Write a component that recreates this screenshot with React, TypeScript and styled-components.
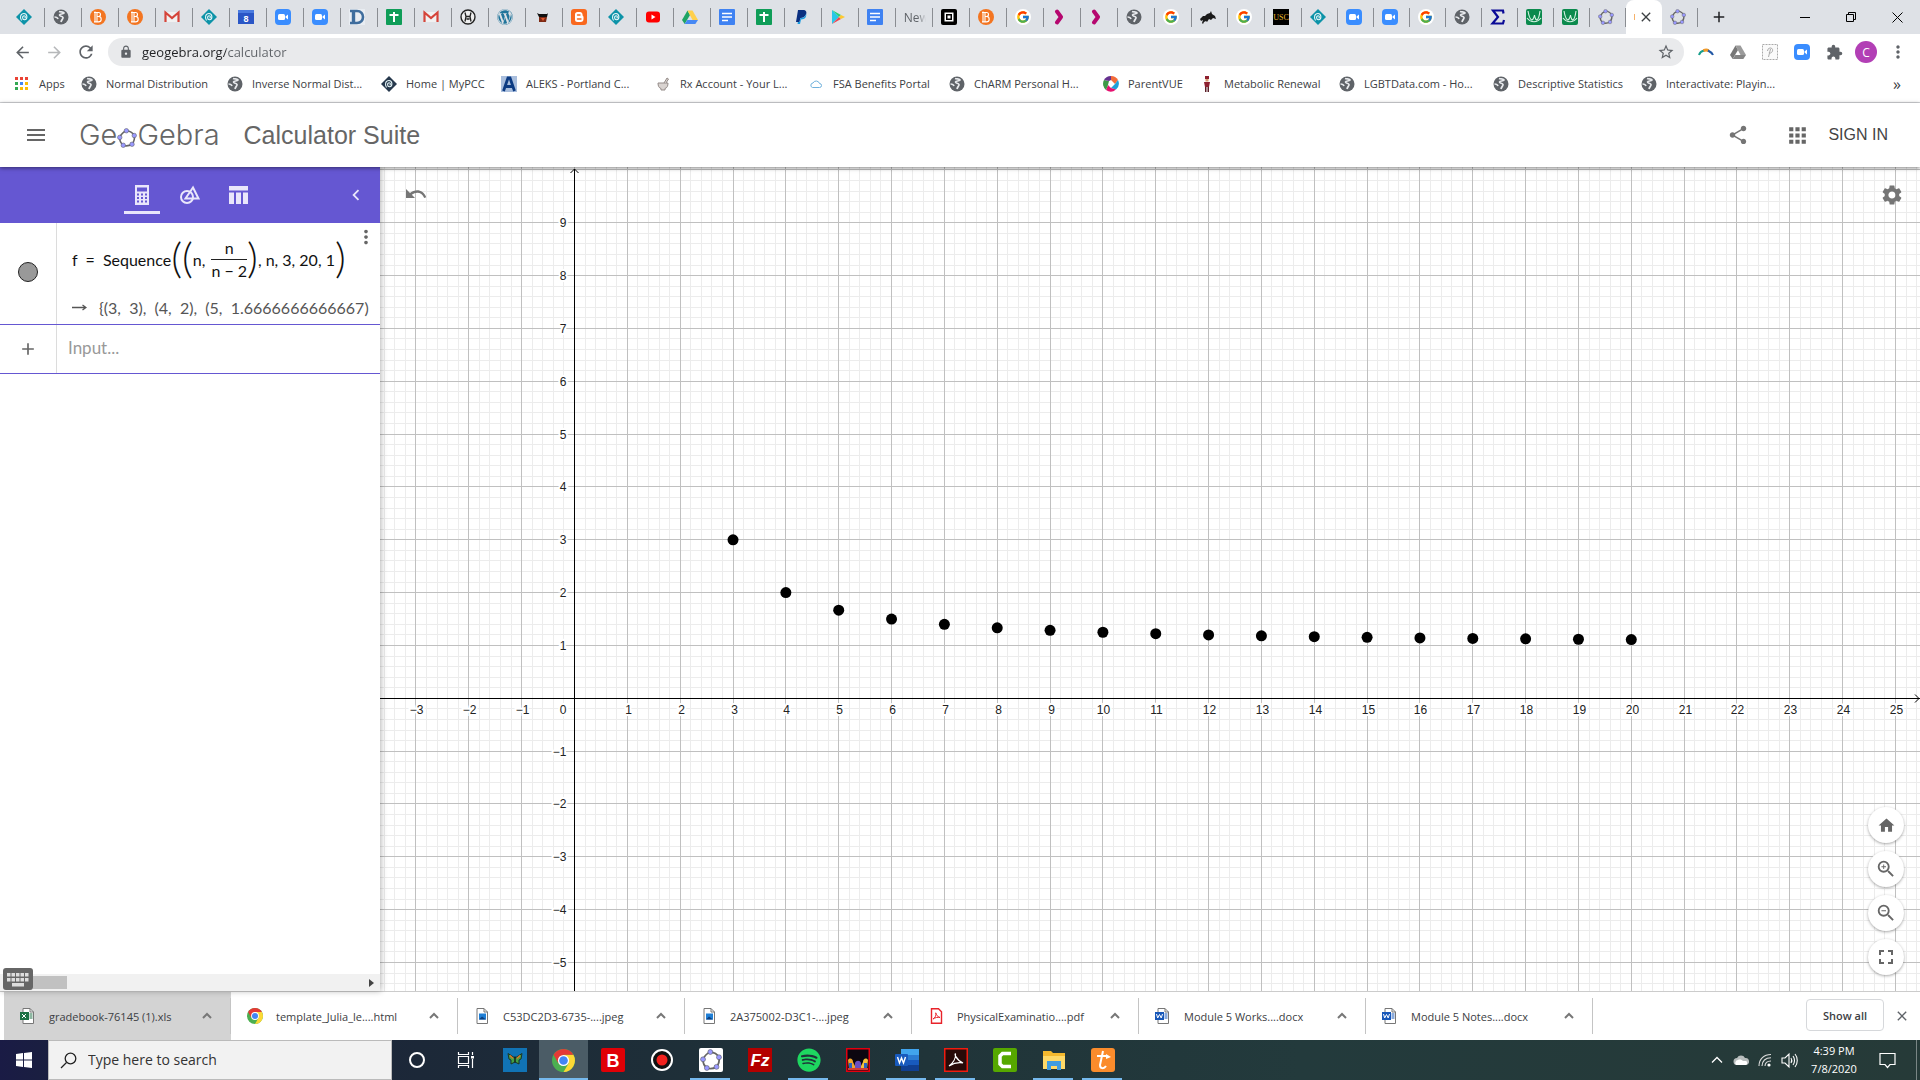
import React from "react";
import styled, { createGlobalStyle } from "styled-components";
import {
  MdAdd, MdApps, MdArrowBack, MdArrowForward, MdChevronLeft, MdClose, MdExtension, MdFullscreen, MdHome,
  MdLock, MdMenu, MdMoreVert, MdRefresh, MdSettings, MdShare, MdStarBorder, MdZoomIn, MdZoomOut,
} from "react-icons/md";
import { FaSpotify, FaWordpress } from "react-icons/fa";
import { FcGoogle } from "react-icons/fc";

const uiFont = '"Open Sans", "Noto Sans", sans-serif';
const mathFont = 'Lato, "Liberation Sans", sans-serif';
const arial = '"Liberation Sans", Arial, sans-serif';
const purple = "#6557d2";

const GlobalStyle = createGlobalStyle`
  *, *::before, *::after { box-sizing: border-box; }
  body { margin: 0; background: #fff; font-family: ${uiFont}; font-size: 12px; color: #3c4043; }
  button, input { font: inherit; color: inherit; border: 0; padding: 0; margin: 0; background: none; outline: none; }
  a { color: inherit; text-decoration: none; }
  svg { display: block; flex: none; }
`;

/* ---------- icons ---------- */

type IconProps = { size?: number };
type SvgProps = IconProps & { children: React.ReactNode; box?: number };

const Svg = ({ size = 16, box = 16, children }: SvgProps) => (
  <svg width={size} height={size} viewBox={`0 0 ${box} ${box}`} aria-hidden="true">{children}</svg>
);

const Diamond = ({ color = "#0d93a8" }: { color?: string }) => (
  <Svg>
    <path d="M8 0l8 8-8 8-8-8z" fill={color} />
    <path d="M5.500 11.500c-2-3-1-7 2.500-7s4 6 .5 6.300c-2.500 0-2.500-4-.3-4 1.500 0 1.500 2 .3 2.200" fill="none" stroke="#e6f6f8" strokeWidth="1.100" />
  </Svg>
);
const Globe = () => (
  <Svg>
    <circle cx="8" cy="8" r="7.500" fill="#5f6368" />
    <path d="M6 2.500c2 .8 4-.5 5 1.500-1 1.500-4 .5-4.500 2-.3 1.500 3 1 3.500 2.500.3 1.500-1.500 2-2 4.500M1.500 8c1.500 0 3 .5 3.500 2" fill="none" stroke="#e8eaed" strokeWidth="1.700" />
  </Svg>
);
const BankB = () => (
  <Svg>
    <circle cx="8" cy="8" r="8" fill="#f37521" />
    <path d="M5 2.500v11M4 3.500h4.500a2 2 0 010 4H6.500M8.500 7.500a2.700 2.700 0 010 5.400H4M7 4v8.500" fill="none" stroke="#fff" strokeWidth="1.100" />
  </Svg>
);
const Gmail = () => (
  <Svg>
    <path d="M1 3h14v10H1z" fill="#f1f1f1" />
    <path d="M1.500 13V3.500L8 9l6.500-5.500V13" fill="none" stroke="#d5443a" strokeWidth="2.200" />
  </Svg>
);
const Calendar = () => (
  <Svg>
    <path d="M0 1h16v14H0z" fill="#2a56c6" />
    <path d="M0 1h16v3H0z" fill="#4a7be0" />
    <text x="8" y="13" textAnchor="middle" fontSize="9" fontWeight="700" fontFamily={arial} fill="#fff">8</text>
  </Svg>
);
const Zoom = () => (
  <Svg>
    <rect width="16" height="16" rx="4" fill="#3a8dff" />
    <rect x="3" y="5" width="7" height="6" rx="1.500" fill="#fff" />
    <path d="M10.500 7.500L13 5.500v5l-2.500-2z" fill="#fff" />
  </Svg>
);
const LetterD = () => (
  <Svg>
    <path d="M0 0h16v16H0z" fill="#e9edf2" />
    <path d="M1 2h7c8 0 8 12 0 12H1" fill="none" stroke="#3f6d9d" strokeWidth="2.600" />
    <path d="M4.500 2v12" stroke="#3f6d9d" strokeWidth="3.400" />
  </Svg>
);
const Sheets = () => (
  <Svg>
    <rect width="16" height="16" rx="1" fill="#0f9d58" />
    <path d="M8 3v10M3.500 6h9" stroke="#fff" strokeWidth="2" />
  </Svg>
);
const Docs = () => (
  <Svg>
    <rect width="16" height="16" rx="1" fill="#3f82f2" />
    <path d="M3 4.500h10M3 8h10M3 11.500h6" stroke="#fff" strokeWidth="1.600" />
  </Svg>
);
const RoundH = () => (
  <Svg>
    <circle cx="8" cy="8" r="7" fill="#eee" stroke="#222" strokeWidth="1.400" />
    <path d="M5 3.500l1 4-1 5M11 3.500l-1 4 1 5M6 7.500h4M6.500 10h3" fill="none" stroke="#222" strokeWidth="1.300" />
  </Svg>
);
const Pot = () => (
  <Svg>
    <path d="M3 4l2 1h8l1-1-1 4H5z" fill="#111" />
    <path d="M5 8h8l-1 5H5z" fill="#7d2a14" /><path d="M7 9l2 3 2-3z" fill="#e2562c" />
  </Svg>
);
const Blogger = () => (
  <Svg>
    <rect width="16" height="16" rx="3" fill="#f9681e" />
    <path d="M4 5.500A2.500 2.500 0 016.500 3H9a2.500 2.500 0 012.500 3c0 1 1 1 1 2v2a3 3 0 01-3 3h-3A2.500 2.500 0 014 10.500z" fill="#fff" />
    <path d="M6.500 6H9M6.500 10h3.500" stroke="#f9681e" strokeWidth="1.400" strokeLinecap="round" />
  </Svg>
);
const YouTube = () => (
  <Svg><rect x="1" y="2.500" width="14" height="11" rx="3" fill="#f00" /><path d="M6.500 5.500l4 2.500-4 2.500z" fill="#fff" /></Svg>
);
const Drive = ({ gray = false }: { gray?: boolean }) => (
  <Svg>
    <path d="M5.500 1.500L0 11l2.700 4L8 6z" fill={gray ? "#777" : "#1fa463"} />
    <path d="M5.500 1.500h5L16 11h-5.500z" fill={gray ? "#9b9b9b" : "#ffd04b"} />
    <path d="M5.300 11H16l-2.700 4H2.700z" fill={gray ? "#858585" : "#4688f4"} />
  </Svg>
);
const PayPal = () => (
  <Svg>
    <path d="M5 1h5c3 0 4 2 3 4.500S9.500 9 7.500 9L6.500 13H3z" fill="#0a2f80" />
    <path d="M13 4.500c1 3-1 6-5 6L7 15H4.500l.4-2h1.600L7.500 9c3 0 5-1 5.500-4.500z" fill="#1a9be0" />
  </Svg>
);
const Play = () => (
  <Svg>
    <path d="M2 1v14l7-7z" fill="#29c7e8" /><path d="M2 1l9 5-2 2z" fill="#27d07c" />
    <path d="M2 15l9-5-2-2z" fill="#ef4550" /><path d="M11 6l4 2-4 2-2-2z" fill="#fdc92f" />
  </Svg>
);
const Square = () => (
  <Svg><rect width="16" height="16" rx="2" fill="#000" /><rect x="3.500" y="3.500" width="9" height="9" fill="#fff" /><rect x="5" y="5" width="6" height="6" fill="#000" /><rect x="6.500" y="6.500" width="3" height="3" fill="#fff" /></Svg>
);
const Google = () => (
  <Svg><circle cx="8" cy="8" r="8" fill="#fff" /><svg x="1" y="1" width="14" height="14"><FcGoogle size={14} /></svg></Svg>
);
const Magenta = () => <Svg><path d="M5 2.500l4 5.500-4 5.500" fill="none" stroke="#b5076f" strokeWidth="4" strokeLinejoin="round" strokeLinecap="round" /></Svg>;
const Bison = () => (
  <Svg><path d="M0 10l3-3 2 0 2-2 3-1 1-2 1 3 3 2 1 3-3-1-2 2-2-1-2 3-1-1-2 1-1 2-1-1 1-3-2 1z" fill="#1a1a1a" /></Svg>
);
const Usc = () => (
  <Svg><path d="M0 0h16v16H0z" fill="#000" /><text x="8" y="11" textAnchor="middle" fontSize="8" fontFamily='"Liberation Serif", serif' fill="#e8b92e">USC</text></Svg>
);
const Sigma = () => <Svg><path d="M13.500 4.500L13 1.500H3L8 8l-5.500 6.500h10.500l1-3.500" fill="none" stroke="#0a0a96" strokeWidth="2.200" /></Svg>;
const Desmos = () => (
  <Svg>
    <rect width="16" height="16" rx="2" fill="#0b8a4d" />
    <path d="M2 2c2 11 5 11 6.500 4 1 7 4 7 5.500-4M1 9c4 5 10 5 14 0" fill="none" stroke="#d8f3e5" strokeWidth="1.100" />
  </Svg>
);

const pentagon = [[7.5, 2.2], [13.8, 6], [12, 13], [5, 13.8], [2.2, 7.5]];
const GeoPentagon = ({ size = 16 }: IconProps) => (
  <Svg size={size}>
    <path d="M7.500 2.200Q11.800 2.400 13.800 6 14.500 10 12 13 8.500 15 5 13.800 2 11.500 2.200 7.500 4 3.500 7.500 2.200z" fill="none" stroke="#666" strokeWidth="1.300" />
    {pentagon.map(([x, y]) => <circle key={x} cx={x} cy={y} r="1.800" fill="#9999ff" stroke="#555" strokeWidth=".4" />)}
  </Svg>
);
const AppsDots = () => (
  <Svg>
    {["#ea4335", "#ea4335", "#ea4335", "#34a853", "#4285f4", "#fbbc05", "#34a853", "#fbbc05", "#fbbc05"].map((c, i) => (
      <rect key={i} x={1 + (i % 3) * 5} y={1 + Math.floor(i / 3) * 5} width="3" height="3" fill={c} />
    ))}
  </Svg>
);
const Aleks = () => (
  <Svg><path d="M0 0h16v16H0z" fill="#a9bedd" /><path d="M2.500 15L7 2h2l4.500 13M5 10.500h6" fill="none" stroke="#0b3a82" strokeWidth="2.800" /></Svg>
);
const Mortar = () => (
  <Svg><path d="M3 7h10c0 3-1 5-3 5.500V14H6v-1.500C4 12 3 10 3 7z" fill="#d9d3d0" stroke="#948b88" /><path d="M9 7l3-5 1.500 1L11 7" fill="#d9d3d0" stroke="#948b88" /></Svg>
);
const CloudLine = () => <Svg><path d="M4.500 11.500h7a2 2 0 000-4 3.500 3.500 0 00-6.500-.5A2.300 2.300 0 004.500 11.500z" fill="none" stroke="#6fb1dc" /></Svg>;
const ParentVue = () => (
  <Svg>
    <path d="M8 0a8 8 0 017 4l-3 4-4-4z" fill="#f26b3a" /><path d="M15 4a8 8 0 01-2 9.500L8 12l4-4z" fill="#1f9fd8" />
    <path d="M13 13.500A8 8 0 013 14l2-5 3 3z" fill="#e5116f" /><path d="M3 14A8 8 0 011 4l5 1-1 4z" fill="#3d9a46" />
    <path d="M1 4a8 8 0 017-4v4L6 5z" fill="#65318f" /><circle cx="8" cy="8" r="2.200" fill="#fff" />
  </Svg>
);
const Man = () => (
  <Svg><path d="M6 0h4v3H6zM5 6h6l-1 5H6z" fill="#8d2030" /><path d="M6.500 3h3v2.500h-3z" fill="#d99c72" /><path d="M6 11h1.500v5H6zM8.500 11H10v5H8.500z" fill="#5c2029" /></Svg>
);
const Arc = () => (
  <Svg><path d="M1 11c1-3 3-4 5-4.500" fill="none" stroke="#169e8b" strokeWidth="2" /><path d="M5.500 6.700c2-1 3.500-1 5 0" fill="none" stroke="#f19a2a" strokeWidth="3" /><path d="M10 6.500c2 1 4 2 5 4.500" fill="none" stroke="#2358a5" strokeWidth="2" /></Svg>
);
const GrayP = () => (
  <Svg><rect x=".5" y=".5" width="15" height="15" fill="#fafafa" stroke="#aaa" strokeDasharray="2 1" /><path d="M6.500 13l2-8M5.500 7c0-4 6-4 5 0-1 2.500-3 2.500-3.500 1" fill="none" stroke="#aaa" /></Svg>
);

const Page = ({ children }: { children: React.ReactNode }) => (
  <Svg><path d="M3 .5h7l3.500 3.500v11.500H3z" fill="#fff" stroke="#777" /><path d="M10 .5V4h3.500" fill="none" stroke="#777" />{children}</Svg>
);
const Excel = () => (
  <Page><path d="M0 4h9v8H0z" fill="#1d7145" /><path d="M2 6l4 4M6 6l-4 4" stroke="#fff" /><path d="M9.500 6h3M9.500 8h3M9.500 10h3" stroke="#1d7145" /></Page>
);
const WordDoc = () => (
  <Page><path d="M0 4h9v8H0z" fill="#1857b8" /><path d="M1.500 6l1.200 4L4.500 6.500 6.200 10l1.300-4" fill="none" stroke="#fff" /><path d="M9.500 6h3M9.500 8h3M9.500 10h3" stroke="#1857b8" /></Page>
);
const ImageDoc = () => <Page><path d="M5 5.500h7v6H5z" fill="#1f7fd6" /><path d="M5 11.500l3-3 4 3z" fill="#0a3f80" /></Page>;
const PdfDoc = () => (
  <Svg><path d="M3.500 .7h7l3 3v11.600h-10z" fill="#fff" stroke="#e8232a" strokeWidth="1.400" /><path d="M5 11c2-1 3.500-4 3-6-1-1 0 3 4 4.500-2-.5-5 0-7 1.500z" fill="none" stroke="#e8232a" /></Svg>
);
const Chrome = ({ size = 16 }: IconProps) => (
  <Svg size={size}>
    <circle cx="8" cy="8" r="8" fill="#4caf50" />
    <path d="M8 16L11.500 10 8 4h6.900A8 8 0 018 16z" fill="#fdd835" />
    <path d="M1.100 4A8 8 0 0114.900 4H8L4.500 10z" fill="#e53935" />
    <circle cx="8" cy="8" r="3.900" fill="#fff" /><circle cx="8" cy="8" r="3" fill="#4285f4" />
  </Svg>
);

/* ---------- tab strip ---------- */

const Screen = styled.div`
  display: flex;
  flex-direction: column;
  height: 100vh;
  min-height: 600px;
  overflow: hidden;
`;
const TabStrip = styled.div`
  display: flex;
  height: 34px;
  padding-left: 8px;
  background: #dee1e6;
`;
const Tabs = styled.div`
  display: flex;
  flex: 1;
  min-width: 0;
`;
const Tab = styled.button<{ $active?: boolean; $grow?: number }>`
  position: relative;
  display: flex;
  flex: ${(p) => p.$grow ?? 28} 1 0;
  align-items: center;
  gap: 3px;
  min-width: 0;
  padding-left: 8px;
  white-space: nowrap;
  background: ${(p) => (p.$active ? "#fff" : "none")};
  border-radius: 8px 8px 0 0;
  &::after {
    content: "";
    position: absolute;
    right: 0;
    top: 8px;
    height: 19px;
    width: ${(p) => (p.$active ? 0 : 1)}px;
    background: #8a8d92;
  }
`;
const FadeText = styled.span`
  width: 22px;
  overflow: hidden;
  color: #5f6368;
  mask-image: linear-gradient(90deg, #000 60%, transparent);
`;
const FaviconEdge = styled.span`
  width: 1px;
  height: 6px;
  background: #f6b26b;
`;
const WindowControls = styled.div`
  display: flex;
  align-items: center;
  width: 222px;
  color: #202124;
`;
const NewTab = styled.button`
  display: grid;
  place-items: center;
  width: 42px;
  margin-right: 42px;
`;
const WinButton = styled.button`
  display: grid;
  place-items: center;
  width: 46px;
  height: 28px;
`;

const tabIcons: React.ReactNode[] = [
  <Diamond />, <Globe />, <BankB />, <BankB />, <Gmail />, <Diamond />, <Calendar />, <Zoom />, <Zoom />, <LetterD />, <Sheets />, <Gmail />, <RoundH />,
  <FaWordpress size={16} color="#21759b" />, <Pot />, <Blogger />, <Diamond />, <YouTube />, <Drive />, <Docs />, <Sheets />, <PayPal />, <Play />, <Docs />,
  <FadeText>New</FadeText>, <Square />, <BankB />, <Google />, <Magenta />, <Magenta />, <Globe />, <Google />, <Bison />, <Google />, <Usc />, <Diamond />,
  <Zoom />, <Zoom />, <Google />, <Globe />, <Sigma />, <Desmos />, <Desmos />, <GeoPentagon />,
];

/* The spare pixels of the strip go to the leading tabs. */
const leadingTabs = 35;

const BrowserTabs = () => (
  <TabStrip>
    <Tabs>
      {tabIcons.map((icon, i) => <Tab key={i} $grow={i < leadingTabs ? 29 : 28} aria-label={`Tab ${i + 1}`}>{icon}</Tab>)}
      <Tab $active aria-label="Close tab"><FaviconEdge /><MdClose size={16} color="#3c4043" /></Tab>
      <Tab aria-label="GeoGebra"><GeoPentagon /></Tab>
    </Tabs>
    <WindowControls>
      <NewTab aria-label="New tab"><MdAdd size={18} /></NewTab>
      <WinButton aria-label="Minimize"><Svg size={10} box={10}><path d="M0 5.500h10" stroke="#000" /></Svg></WinButton>
      <WinButton aria-label="Restore"><Svg size={10} box={10}><path d="M.5 2.500h7v7h-7zM2.500 2.500v-2h7v7h-2" fill="none" stroke="#000" /></Svg></WinButton>
      <WinButton aria-label="Close"><Svg size={11} box={11}><path d="M.5 .5l10 10M10.500 .5l-10 10" stroke="#000" /></Svg></WinButton>
    </WindowControls>
  </TabStrip>
);

/* ---------- address bar and bookmarks ---------- */

const Toolbar = styled.div`
  display: flex;
  align-items: center;
  height: 36px;
  padding: 0 6px 0 12px;
  color: #5f6368;
`;
const NavButton = styled.button<{ $dim?: boolean }>`
  display: grid;
  place-items: center;
  width: 20px;
  margin-right: 12px;
  opacity: ${(p) => (p.$dim ? 0.45 : 1)};
`;
const Omnibox = styled.label`
  display: flex;
  flex: 1;
  align-items: center;
  height: 28px;
  gap: 9px;
  padding: 0 9px 0 11px;
  border-radius: 14px;
  background: #e9eaec;
`;
const UrlInput = styled.input`
  flex: 1;
  height: 24px;
  font-size: 13px;
  color: transparent;
  background: linear-gradient(90deg, #202124 84px, #5f6368 84px);
  background-clip: text;
`;
const Extensions = styled.div`
  display: grid;
  grid-template-columns: repeat(7, 32px);
  place-items: center;
  margin-left: 6px;
`;
const IconButton = styled.button`
  display: grid;
  place-items: center;
`;
const Avatar = styled.button`
  width: 22px;
  height: 22px;
  border-radius: 50%;
  background: #b23fb5;
  color: #fff;
`;
const Bookmarks = styled.nav`
  display: flex;
  align-items: center;
  height: 33px;
  padding: 0 19px 5px 14px;
  border-bottom: 1px solid #d5d7da;
`;
const Bookmark = styled.a<{ $w: number }>`
  display: flex;
  flex: none;
  align-items: center;
  gap: 9px;
  width: ${(p) => p.$w}px;
  font-size: 11px;
  white-space: nowrap;
`;
const More = styled.button`
  margin-left: auto;
  font-size: 16px;
  line-height: 20px;
`;

const bookmarks: [React.ReactNode, string, number][] = [
  [<AppsDots />, "Apps", 67], [<Globe />, "Normal Distribution", 146], [<Globe />, "Inverse Normal Dist...", 154],
  [<Diamond color="#26384c" />, "Home | MyPCC", 120], [<Aleks />, "ALEKS - Portland C...", 154], [<Mortar />, "Rx Account - Your L...", 153],
  [<CloudLine />, "FSA Benefits Portal", 141], [<Globe />, "ChARM Personal H...", 154], [<ParentVue />, "ParentVUE", 96],
  [<Man />, "Metabolic Renewal", 140], [<Globe />, "LGBTData.com - Ho...", 154], [<Globe />, "Descriptive Statistics", 148], [<Globe />, "Interactivate: Playin...", 140],
];

const BrowserBars = () => (
  <>
    <Toolbar>
      <NavButton aria-label="Back"><MdArrowBack size={19} /></NavButton>
      <NavButton aria-label="Forward" $dim><MdArrowForward size={19} /></NavButton>
      <NavButton aria-label="Reload"><MdRefresh size={20} /></NavButton>
      <Omnibox>
        <MdLock size={14} />
        <UrlInput aria-label="Address" defaultValue="geogebra.org/calculator" />
        <MdStarBorder size={18} />
      </Omnibox>
      <Extensions>
        <Arc /><Drive gray /><GrayP /><Zoom /><MdExtension size={17} />
        <Avatar>C</Avatar>
        <IconButton aria-label="Menu"><MdMoreVert size={20} /></IconButton>
      </Extensions>
    </Toolbar>
    <Bookmarks>
      {bookmarks.map(([icon, label, w]) => <Bookmark key={label} href="#" $w={w}>{icon}{label}</Bookmark>)}
      <More aria-label="More bookmarks">»</More>
    </Bookmarks>
  </>
);

/* ---------- GeoGebra header ---------- */

const Header = styled.header`
  position: relative;
  z-index: 2;
  display: flex;
  align-items: center;
  height: 64px;
  padding: 0 32px 0 24px;
  background: #fff;
  color: #666;
  font-family: ${arial};
  box-shadow: 0 1px 4px rgba(0, 0, 0, 0.5);
`;
const Logo = styled.a`
  display: flex;
  align-items: center;
  min-width: 139px;
  margin: 0 24px 0 31px;
  font: 300 29px/32px Inter, sans-serif;
  svg { margin: 6px 0 0; }
`;
const Title = styled.h1`
  margin: 0;
  font: 400 25px/32px ${arial};
`;
const HeaderActions = styled.div`
  display: flex;
  align-items: center;
  margin-left: auto;
`;
const AppsButton = styled(IconButton)`
  margin: 0 18px 0 36px;
`;
const SignIn = styled.a`
  font-size: 16px;
  color: #444;
`;

const AppHeader = () => (
  <Header>
    <IconButton aria-label="Main menu"><MdMenu size={24} /></IconButton>
    <Logo href="#">Ge<GeoPentagon size={20} />Gebra</Logo>
    <Title>Calculator Suite</Title>
    <HeaderActions>
      <IconButton aria-label="Share"><MdShare size={22} color="#757575" /></IconButton>
      <AppsButton aria-label="Apps"><MdApps size={25} color="#666" /></AppsButton>
      <SignIn href="#">SIGN IN</SignIn>
    </HeaderActions>
  </Header>
);

/* ---------- algebra panel ---------- */

const Main = styled.main`
  display: flex;
  flex: 1;
  min-height: 0;
`;
const Panel = styled.section`
  position: relative;
  z-index: 1;
  display: flex;
  flex-direction: column;
  width: 380px;
  background: #fff;
  box-shadow: 1px 0 6px rgba(0, 0, 0, 0.3);
`;
const PanelTabs = styled.div`
  display: flex;
  align-items: center;
  height: 56px;
  padding: 0 13px 0 124px;
  gap: 12px;
  background: ${purple};
  color: #e9e6fb;
`;
const PanelTab = styled.button<{ $on?: boolean }>`
  display: grid;
  place-items: center;
  width: 36px;
  height: 36px;
  margin-top: 2px;
  border-bottom: 3px solid ${(p) => (p.$on ? "#e9e6fb" : "transparent")};
`;
const Collapse = styled(IconButton)`
  margin-left: auto;
`;
const Row = styled.div<{ $h: number }>`
  display: flex;
  height: ${(p) => p.$h}px;
  border-bottom: 1px solid ${purple};
`;
const Gutter = styled.div`
  display: grid;
  place-items: center;
  width: 57px;
  border-right: 1px solid #dcdcdc;
  color: #666;
`;
const Marble = styled.button`
  width: 20px;
  height: 20px;
  margin-bottom: 3px;
  border: 1px solid #222;
  border-radius: 50%;
  background: #999;
`;
const Expression = styled.div`
  position: relative;
  flex: 1;
  min-width: 0;
  padding: 10px 0 0 15px;
  font-family: ${mathFont};
  font-size: 16px;
  color: #111;
`;
const Formula = styled.div`
  display: flex;
  align-items: center;
  height: 52px;
  white-space: pre;
`;
const Relation = styled.span`
  margin: 0 8px;
`;
const Fraction = styled.span`
  display: grid;
  justify-items: center;
  line-height: 22px;
  margin-left: 6px;
`;
const Numerator = styled.span`
  justify-self: stretch;
  text-align: center;
  border-bottom: 1px solid #222;
`;
const BigParen = styled.span`
  font: 300 42px/44px ${mathFont};
  padding-bottom: 4px;
`;
const Output = styled.div`
  display: flex;
  align-items: center;
  gap: 12px;
  height: 45px;
  font-size: 16px;
  color: #555;
  white-space: pre;
`;
const RowMenu = styled(IconButton)`
  position: absolute;
  top: 3px;
  right: 3px;
  color: #666;
`;
const ExpressionInput = styled.input`
  flex: 1;
  min-width: 0;
  padding: 0 11px 3px;
  font: 17px/24px ${mathFont};
  &::placeholder { color: #999; opacity: 1; }
`;
const PanelFooter = styled.div`
  position: relative;
  display: flex;
  align-items: center;
  height: 17px;
  margin-top: auto;
  padding: 0 6px 0 33px;
  background: #f1f1f1;
`;
const Thumb = styled.div`
  width: 34px;
  height: 13px;
  background: #c1c1c1;
`;
const ScrollArrow = styled.button`
  margin-left: auto;
  border: 4px solid transparent;
  border-left: 5px solid #444;
  border-right: 0;
`;
const KeyboardButton = styled.button`
  position: absolute;
  left: 3px;
  bottom: 1px;
  display: grid;
  place-items: center;
  width: 30px;
  height: 22px;
  border-radius: 3px;
  background: #666;
`;

const AlgebraPanel = () => (
  <Panel>
    <PanelTabs>
      <PanelTab $on aria-label="Algebra">
        <Svg size={22} box={22}>
          <path fillRule="evenodd" d="M4 1h14v20H4zM6 3.500v4h10v-4z" fill="currentColor" />
          {[0, 1, 2].flatMap((r) => [0, 1, 2].map((c) => <rect key={`${r}${c}`} x={6 + c * 4} y={9.5 + r * 3.5} width="2" height="2" fill={purple} />))}
        </Svg>
      </PanelTab>
      <PanelTab aria-label="Tools">
        <Svg size={22} box={22}><circle cx="8" cy="13" r="6" fill="none" stroke="currentColor" strokeWidth="2" /><path d="M14 3.500L6.500 14.500h13z" fill="none" stroke="currentColor" strokeWidth="2" /></Svg>
      </PanelTab>
      <PanelTab aria-label="Table">
        <Svg size={22} box={22}><path d="M2 2h19v4.500H2zM2 8.500h5V20H2zM9 8.500h5V20H9zM16 8.500h5V20h-5z" fill="currentColor" /></Svg>
      </PanelTab>
      <Collapse aria-label="Collapse"><MdChevronLeft size={22} /></Collapse>
    </PanelTabs>
    <Row $h={102}>
      <Gutter><Marble aria-label="Show f" /></Gutter>
      <Expression>
        <Formula>
          f<Relation>=</Relation>Sequence<BigParen>((</BigParen>n,
          <Fraction><Numerator>n</Numerator><span>n − 2</span></Fraction>
          <BigParen>)</BigParen>{", n, 3, 20, 1"}<BigParen>)</BigParen>
        </Formula>
        <Output>
          <Svg size={15} box={15}><path d="M0 7.500h14M10.500 5l3.500 2.500-3.500 2.500" fill="none" stroke="#555" strokeWidth="1.300" /></Svg>
          {"{(3,  3),  (4,  2),  (5,  1.6666666666667)"}
        </Output>
        <RowMenu aria-label="More"><MdMoreVert size={22} /></RowMenu>
      </Expression>
    </Row>
    <Row $h={49}>
      <Gutter><MdAdd size={20} /></Gutter>
      <ExpressionInput aria-label="Input" placeholder="Input..." />
    </Row>
    <PanelFooter>
      <Thumb />
      <ScrollArrow aria-label="Scroll right" />
      <KeyboardButton aria-label="Keyboard">
        <Svg size={24} box={24}>
          {[5, 10].flatMap((y) => [1, 5.5, 10, 14.5, 19].map((x) => <rect key={`${x}-${y}`} x={x} y={y} width="3.500" height="3.500" fill="#ddd" />))}
          <rect x="6" y="15" width="12" height="3.500" fill="#ddd" />
        </Svg>
      </KeyboardButton>
    </PanelFooter>
  </Panel>
);

/* ---------- graphics view ---------- */

const Graphics = styled.section`
  position: relative;
  flex: 1;
  min-width: 0;
  overflow: hidden;
  color: #666;
`;
const Undo = styled(IconButton)`
  position: absolute;
  left: 25px;
  top: 18px;
`;
const Settings = styled(IconButton)`
  position: absolute;
  right: 16px;
  top: 16px;
`;
const ZoomControls = styled.div`
  position: absolute;
  right: 16px;
  bottom: 16px;
  display: grid;
  gap: 8px;
`;
const RoundButton = styled(IconButton)`
  width: 36px;
  height: 36px;
  border-radius: 50%;
  background: #fff;
  color: #666;
  box-shadow: 0 1px 3px rgba(0, 0, 0, 0.35);
`;

const unit = 52.84;
const origin = { x: 194.5, y: 531.3 };
const px = (v: number) => Math.floor(origin.x + v * unit) + 0.5;
const py = (v: number) => Math.floor(origin.y - v * unit) + 0.5;
const range = (from: number, to: number) => Array.from({ length: to - from + 1 }, (_, i) => from + i);
const minus = (n: number) => (n < 0 ? `−${-n}` : `${n}`);

const Plot = () => (
  <svg width="100%" height="100%" role="img" aria-label="Graph of the sequence">
    <g stroke="#ececec">
      {range(-18, 250).map((i) => <line key={i} x1={px(i / 5)} x2={px(i / 5)} y1="0" y2="100%" />)}
      {range(-100, 50).map((i) => <line key={i} y1={py(i / 5)} y2={py(i / 5)} x1="0" x2="100%" />)}
    </g>
    <g stroke="#c0c0c0">
      {range(-3, 50).map((i) => <line key={i} x1={px(i)} x2={px(i)} y1="0" y2="100%" />)}
      {range(-20, 10).map((i) => <line key={i} y1={py(i)} y2={py(i)} x1="0" x2="100%" />)}
    </g>
    <g stroke="#000" fill="none">
      <path d={`M${px(0) - 4} 6l4-4 4 4`} />
      <line x1={px(0)} x2={px(0)} y1="2" y2="100%" />
      <line x1="0" x2="100%" y1={py(0)} y2={py(0)} />
      <svg x="100%" y={py(0)} overflow="visible"><path d="M-5-4l4 4-4 4" /></svg>
    </g>
    <g fontFamily={arial} fontSize="12" fill="#222" stroke="#fff" strokeWidth="4" paintOrder="stroke">
      {range(-3, 25).filter((i) => i !== 0).map((i) => <text key={i} x={px(i) + 1} y={py(0) + 15} textAnchor="middle">{minus(i)}</text>)}
      {range(-5, 9).filter((i) => i !== 0).map((i) => <text key={i} x={px(0) - 8} y={py(i) + 4} textAnchor="end">{minus(i)}</text>)}
      <text x={px(0) - 8} y={py(0) + 15} textAnchor="end">0</text>
    </g>
    {range(3, 20).map((n) => <circle key={n} cx={origin.x + n * unit} cy={origin.y - (n / (n - 2)) * unit} r="5.500" />)}
  </svg>
);

const GraphicsView = () => (
  <Graphics>
    <Plot />
    <Undo aria-label="Undo">
      <Svg size={22} box={22}><path d="M1 4v9h9L6.800 9.800C11 6.500 17 7 19.200 13l2-.7C18.500 4.500 10.500 3.500 5 8z" fill="#757575" /></Svg>
    </Undo>
    <Settings aria-label="Settings"><MdSettings size={24} color="#757575" /></Settings>
    <ZoomControls>
      <RoundButton aria-label="Home"><MdHome size={19} /></RoundButton>
      <RoundButton aria-label="Zoom in"><MdZoomIn size={22} /></RoundButton>
      <RoundButton aria-label="Zoom out"><MdZoomOut size={22} /></RoundButton>
      <RoundButton aria-label="Full screen"><MdFullscreen size={24} /></RoundButton>
    </ZoomControls>
  </Graphics>
);

/* ---------- downloads ---------- */

const Shelf = styled.div`
  display: flex;
  align-items: center;
  height: 49px;
  padding: 0 10px 0 4px;
  border-top: 1px solid #ccc;
`;
const Download = styled.button<{ $hot?: boolean }>`
  position: relative;
  display: flex;
  align-items: center;
  gap: 13px;
  width: 227px;
  height: 48px;
  padding: 0 17px 0 16px;
  font-size: 11px;
  background: ${(p) => (p.$hot ? "#d3d3d3" : "none")};
  &::after {
    content: "";
    position: absolute;
    right: 0;
    top: 6px;
    width: 1px;
    height: 36px;
    background: #c4c4c4;
  }
  svg:last-child { margin-left: auto; }
`;
const ShowAll = styled.button`
  width: 78px;
  height: 32px;
  margin: 0 10px 2px auto;
  border: 1px solid #d6d8db;
  border-radius: 4px;
  font-size: 11px;
  font-weight: 600;
`;

const downloads: [React.ReactNode, string][] = [
  [<Excel />, "gradebook-76145 (1).xls"], [<Chrome />, "template_Julia_le....html"], [<ImageDoc />, "C53DC2D3-6735-....jpeg"],
  [<ImageDoc />, "2A375002-D3C1-....jpeg"], [<PdfDoc />, "PhysicalExaminatio....pdf"], [<WordDoc />, "Module 5 Works....docx"], [<WordDoc />, "Module 5 Notes....docx"],
];

const DownloadShelf = () => (
  <Shelf>
    {downloads.map(([icon, name], i) => (
      <Download key={name} $hot={i === 0}>
        {icon}{name}
        <Svg size={14} box={14}><path d="M3 9l4-4 4 4" fill="none" stroke="#777" strokeWidth="2" /></Svg>
      </Download>
    ))}
    <ShowAll>Show all</ShowAll>
    <IconButton aria-label="Close downloads"><MdClose size={16} color="#5f6368" /></IconButton>
  </Shelf>
);

/* ---------- Windows taskbar ---------- */

const Taskbar = styled.footer`
  display: flex;
  align-items: center;
  height: 40px;
  background: linear-gradient(90deg, #1a1b45 0, #1a1f40 48px, #1c2838 420px, #1f3238 800px, #233a3c 1300px, #263a38 100%);
  color: #fff;
`;
const Start = styled.button`
  display: grid;
  place-items: center;
  width: 48px;
  height: 40px;
`;
const Search = styled.label`
  display: flex;
  align-items: center;
  gap: 11px;
  width: 344px;
  height: 40px;
  padding: 0 11px;
  border: 1px solid #bbb;
  background: #f2f2f2;
  color: #222;
`;
const SearchInput = styled.input`
  flex: 1;
  font-size: 14px;
  line-height: 20px;
  &::placeholder { color: #333; opacity: 1; }
`;
const TaskButton = styled.button<{ $open?: boolean; $hot?: boolean }>`
  position: relative;
  display: grid;
  place-items: center;
  width: 49px;
  height: 40px;
  background: ${(p) => (p.$hot ? "#4b5c66" : "none")};
  &::after {
    content: "";
    position: absolute;
    bottom: 0;
    left: ${(p) => (p.$hot ? 0 : 4)}px;
    right: ${(p) => (p.$hot ? 0 : 5)}px;
    height: ${(p) => (p.$open || p.$hot ? 2 : 0)}px;
    background: #76b9ed;
  }
`;
const Tray = styled.div`
  display: flex;
  align-items: center;
  gap: 8px;
  margin-left: auto;
  padding-right: 3px;
`;
const Clock = styled.time`
  width: 56px;
  margin: 0 9px 0 0;
  font-size: 11px;
  line-height: 18px;
  text-align: center;
`;
const ShowDesktop = styled.button`
  width: 1px;
  height: 40px;
  margin-left: 12px;
  background: #7a8685;
`;

const Tile = ({ fill, children, rx = 2 }: { fill: string; children: React.ReactNode; rx?: number }) => (
  <Svg size={24} box={24}><rect width="24" height="24" rx={rx} fill={fill} />{children}</Svg>
);
const TileText = ({ children, size = 18, slant }: { children: string; size?: number; slant?: string }) => (
  <text x="12" y={12 + size * 0.37} textAnchor="middle" fontSize={size} fontWeight="700" fontStyle={slant} fontFamily={arial} fill="#fff">{children}</text>
);

const apps: { name: string; icon: React.ReactNode; open?: boolean; hot?: boolean }[] = [
  { name: "Cortana", icon: <Svg size={18} box={18}><circle cx="9" cy="9" r="7" fill="none" stroke="#fff" strokeWidth="2" /></Svg> },
  { name: "Task view", icon: <Svg size={18} box={18}><path d="M1.500 1v2.500h10V1M1.500 17v-2.500h10V17M1.500 5.500h10v7h-10zM15.500 1v3M15.500 8v9" fill="none" stroke="#fff" strokeWidth="1.200" /><path d="M14 5h3v2.500h-3z" fill="#fff" /></Svg> },
  { name: "Butterfly", icon: <Tile fill="#1173b5" rx={0}><path d="M12 10L5 5.500l1 5.500 2 1 0 4 4-2 4 2 0-4 2-1 1-5.500z" fill="#43a047" stroke="#1b3524" /><path d="M7 7.500l3 3M17 7.500l-3 3" stroke="#d8742c" strokeWidth="1.500" /><path d="M12 8.500v6" stroke="#14231a" strokeWidth="1.500" /></Tile> },
  { name: "Chrome", icon: <Chrome size={23} />, hot: true },
  { name: "Bitdefender", icon: <Tile fill="#e00006"><TileText>B</TileText></Tile> },
  { name: "Recorder", icon: <Svg size={24} box={24}><circle cx="12" cy="12" r="10" fill="#111" stroke="#fff" strokeWidth="2" /><circle cx="12" cy="12" r="5.500" fill="#f3211d" /></Svg> },
  { name: "GeoGebra", icon: <Tile fill="#fff"><svg x="1" y="1"><GeoPentagon size={22} /></svg></Tile>, open: true },
  { name: "FileZilla", icon: <Tile fill="#b30000" rx={0}><TileText size={17} slant="italic">Fz</TileText></Tile> },
  { name: "Spotify", icon: <FaSpotify size={24} color="#1ed760" />, open: true },
  { name: "ViewSonic", icon: <Tile fill="#e3000f" rx={0}><path d="M1.500 1.500h21v21h-21z" fill="#0c0610" /><path d="M2 12c2-3 5-1 5 2l2 4v3H3z" fill="#f0a52c" /><path d="M9 15c1-3 5-3 6 0v6H9z" fill="#6a4fc0" /><path d="M22 12c-2-3-5-1-5 2l-2 4v3h6z" fill="#f3c03a" /><path d="M3 15h3v5H3zM18 15h3v5h-3z" fill="#2b62c0" /><path d="M2 20h20v2H2z" fill="#d13d35" /></Tile> },
  { name: "Word", icon: <Svg size={24} box={24}><path d="M6 1h18v6H6z" fill="#41a5ee" /><path d="M6 7h18v6H6z" fill="#2b7cd3" /><path d="M6 12h18v5H6z" fill="#185abd" /><path d="M6 17h18v6H6z" fill="#103f91" /><rect y="6" width="13" height="12" rx="1" fill="#185abd" /><path d="M2.500 9l2 6 2-5 2 5 2-6" fill="none" stroke="#fff" strokeWidth="1.400" /></Svg>, open: true },
  { name: "Acrobat", icon: <Tile fill="#f01c10" rx={0}><path d="M1.500 1.500h21v21h-21z" fill="#280a08" /><path d="M5 18c4-3 7-8 6.500-12-1-1-.5 5 7.500 9-5-1-9 0-14 3z" fill="none" stroke="#fff" strokeWidth="1.200" /></Tile>, open: true },
  { name: "Camtasia", icon: <Tile fill="#56a800"><path d="M18 5.500H9.500L7 8v8l2.500 2.500H18" fill="none" stroke="#fff" strokeWidth="3.500" /></Tile> },
  { name: "File Explorer", icon: <Svg size={24} box={24}><path d="M1 3h8l2 2h12v16H1z" fill="#f5b92e" /><path d="M1 8h22v13H1z" fill="#ffd967" /><path d="M5 13h14v9h-4v-4H9v4H5z" fill="#3f9ce0" /></Svg>, open: true },
  { name: "Typing", icon: <Tile fill="#fb8c2c" rx={3}><path d="M12 3L9 17c0 4 4 4 6 1M6 8h9" fill="none" stroke="#fff" strokeWidth="2" /><path d="M15 6l5 3-5 2z" fill="#fff" /></Tile>, open: true },
];

const WindowsTaskbar = () => (
  <Taskbar>
    <Start aria-label="Start"><Svg><path d="M0 2l7-1v6.500H0zM8 .9L16 0v7.500H8zM0 8.500h7V15l-7-1zM8 8.500h8V16l-8-1z" fill="#fff" /></Svg></Start>
    <Search>
      <Svg size={17} box={17}><circle cx="10.500" cy="6.500" r="5.300" fill="none" stroke="#222" strokeWidth="1.300" /><path d="M6.500 10.500L1 16" stroke="#222" strokeWidth="1.300" /></Svg>
      <SearchInput aria-label="Search" placeholder="Type here to search" />
    </Search>
    {apps.map((a) => <TaskButton key={a.name} aria-label={a.name} $open={a.open} $hot={a.hot}>{a.icon}</TaskButton>)}
    <Tray>
      <Svg><path d="M3 10.500l5-5 5 5" fill="none" stroke="#fff" strokeWidth="1.300" /></Svg>
      <Svg><path d="M4 13a3.500 3.500 0 010-7 4.500 4.500 0 018 0 3.500 3.500 0 011 7z" fill="#b8bdbd" /><path d="M3 13a3 3 0 012-5c2-1 4 0 5 1h3a2.200 2.200 0 010 4z" fill="#fff" /></Svg>
      <Svg><path d="M2 14C2 7 7 2.500 14 2.500M5 14c0-5 3.500-8.300 9-8.300M8 14c0-3 2-5 6-5" fill="none" stroke="#ddd" strokeWidth="1.100" /><circle cx="12" cy="13" r="1.600" fill="#fff" /></Svg>
      <Svg size={17} box={17}><path d="M1 6h3l4-4v13l-4-4H1zM10 6c1 1.500 1 3.500 0 5M12 4c2 2.500 2 6.500 0 9M14 2c3 3.500 3 9.500 0 13" fill="none" stroke="#fff" strokeWidth="1.100" /></Svg>
      <Clock>4:39 PM<br />7/8/2020</Clock>
      <Svg size={17} box={17}><path d="M1 1.500h15v11h-5L8.500 15.500 6 12.500H1z" fill="none" stroke="#fff" strokeWidth="1.200" /></Svg>
      <ShowDesktop aria-label="Show desktop" />
    </Tray>
  </Taskbar>
);

export default function App() {
  return (
    <Screen>
      <GlobalStyle />
      <BrowserTabs />
      <BrowserBars />
      <AppHeader />
      <Main>
        <AlgebraPanel />
        <GraphicsView />
      </Main>
      <DownloadShelf />
      <WindowsTaskbar />
    </Screen>
  );
}
